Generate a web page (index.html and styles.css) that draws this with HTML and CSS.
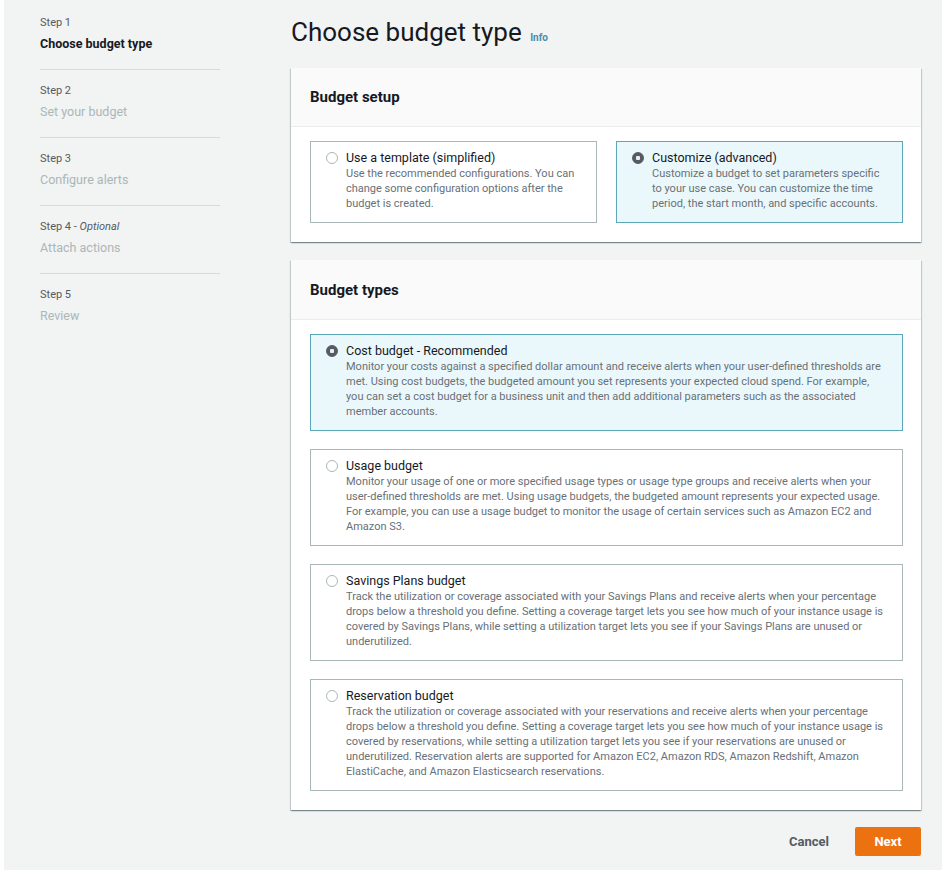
FILE: index.html
```html
<!DOCTYPE html>
<html lang="en">
<head>
<meta charset="utf-8">
<title>Choose budget type</title>
<link rel="stylesheet" href="styles.css">
</head>
<body>
<div class="page">
  <nav class="steps">
    <ol class="step-list">
      <li class="step">
        <div class="step-label">Step 1</div>
        <div class="step-title active">Choose budget type</div>
      </li>
      <li class="step">
        <div class="step-label">Step 2</div>
        <div class="step-title">Set your budget</div>
      </li>
      <li class="step">
        <div class="step-label">Step 3</div>
        <div class="step-title">Configure alerts</div>
      </li>
      <li class="step">
        <div class="step-label">Step 4 - <em>Optional</em></div>
        <div class="step-title">Attach actions</div>
      </li>
      <li class="step last">
        <div class="step-label">Step 5</div>
        <div class="step-title">Review</div>
      </li>
    </ol>
  </nav>

  <main class="content">
    <h1 class="page-title">Choose budget type <a class="info" href="#">Info</a></h1>

    <section class="panel">
      <header class="panel-header"><h2>Budget setup</h2></header>
      <div class="panel-body tiles-2">
        <label class="tile">
          <span class="radio"></span>
          <span class="tile-text">
            <span class="tile-label">Use a template (simplified)</span>
            <span class="tile-desc">Use the recommended configurations. You can change some configuration options after the budget is created.</span>
          </span>
        </label>
        <label class="tile selected">
          <span class="radio checked"></span>
          <span class="tile-text">
            <span class="tile-label">Customize (advanced)</span>
            <span class="tile-desc">Customize a budget to set parameters specific to your use case. You can customize the time period, the start month, and specific accounts.</span>
          </span>
        </label>
      </div>
    </section>

    <section class="panel">
      <header class="panel-header tall"><h2>Budget types</h2></header>
      <div class="panel-body tiles-1">
        <label class="tile selected">
          <span class="radio checked"></span>
          <span class="tile-text">
            <span class="tile-label">Cost budget - Recommended</span>
            <span class="tile-desc">Monitor your costs against a specified dollar amount and receive alerts when your user-defined thresholds are met. Using cost budgets, the budgeted amount you set represents your expected cloud spend. For example, you can set a cost budget for a business unit and then add additional parameters such as the associated member accounts.</span>
          </span>
        </label>
        <label class="tile">
          <span class="radio"></span>
          <span class="tile-text">
            <span class="tile-label">Usage budget</span>
            <span class="tile-desc">Monitor your usage of one or more specified usage types or usage type groups and receive alerts when your user-defined thresholds are met. Using usage budgets, the budgeted amount represents your expected usage. For example, you can use a usage budget to monitor the usage of certain services such as Amazon EC2 and Amazon S3.</span>
          </span>
        </label>
        <label class="tile">
          <span class="radio"></span>
          <span class="tile-text">
            <span class="tile-label">Savings Plans budget</span>
            <span class="tile-desc">Track the utilization or coverage associated with your Savings Plans and receive alerts when your percentage drops below a threshold you define. Setting a coverage target lets you see how much of your instance usage is covered by Savings Plans, while setting a utilization target lets you see if your Savings Plans are unused or underutilized.</span>
          </span>
        </label>
        <label class="tile">
          <span class="radio"></span>
          <span class="tile-text">
            <span class="tile-label">Reservation budget</span>
            <span class="tile-desc">Track the utilization or coverage associated with your reservations and receive alerts when your percentage drops below a threshold you define. Setting a coverage target lets you see how much of your instance usage is covered by reservations, while setting a utilization target lets you see if your reservations are unused or underutilized. Reservation alerts are supported for Amazon EC2, Amazon RDS, Amazon Redshift, Amazon ElastiCache, and Amazon Elasticsearch reservations.</span>
          </span>
        </label>
      </div>
    </section>

    <footer class="actions">
      <button class="btn-link" type="button">Cancel</button>
      <button class="btn-primary" type="button">Next</button>
    </footer>
  </main>
</div>
</body>
</html>
```

FILE: styles.css
```css
* { box-sizing: border-box; }

html, body {
  margin: 0;
  padding: 0;
  background: #ffffff;
}

body {
  font-family: Roboto, "Liberation Sans", Arial, sans-serif;
  color: #16191f;
}

.page {
  margin-left: 4px;
  min-height: 870px;
  background: #f2f3f3;
  display: flex;
  align-items: flex-start;
  padding-left: 36px;
  gap: 71px;
}

/* ---------- Sidebar steps ---------- */
.steps {
  width: 180px;
  flex: none;
  padding-top: 2px;
}

.step-list {
  list-style: none;
  margin: 0;
  padding: 0;
}

.step {
  padding: 13px 0 15px;
  border-bottom: 1px solid #d5dbdb;
}

.step.last { border-bottom: none; }

.step-label {
  font-size: 11px;
  line-height: 16px;
  color: #545b64;
}

.step-label em {
  font-style: italic;
}

.step-title {
  margin-top: 3px;
  font-size: 12.5px;
  line-height: 20px;
  color: #aab7b8;
}

.step-title.active {
  color: #16191f;
  font-weight: 700;
}

/* ---------- Main ---------- */
.content {
  width: 630px;
  flex: none;
}

.page-title {
  margin: 16px 0 20px;
  font-size: 26px;
  line-height: 32px;
  height: 32px;
  font-weight: 400;
  color: #16191f;
}

.info {
  font-size: 10px;
  line-height: 1;
  font-weight: 700;
  color: #4b8ca8;
  text-decoration: none;
  margin-left: 2px;
}

.panel {
  background: #ffffff;
  box-shadow: 0 1px 1px 0 rgba(0, 28, 36, 0.3),
              1px 1px 1px 0 rgba(0, 28, 36, 0.15),
              -1px 1px 1px 0 rgba(0, 28, 36, 0.15);
  margin-bottom: 18px;
}

.panel-header {
  height: 59px;
  padding: 0 19px;
  display: flex;
  align-items: center;
  background: #fafafa;
  border-bottom: 1px solid #eaeded;
}

.panel-header.tall { height: 60px; }

.panel-header h2 {
  margin: 0;
  font-size: 15px;
  font-weight: 700;
  color: #16191f;
}

.panel-body {
  padding: 14px 18px 19px 19px;
}

.tiles-2 {
  display: grid;
  grid-template-columns: 1fr 1fr;
  gap: 19px;
}

.tiles-1 {
  display: flex;
  flex-direction: column;
  gap: 18px;
}

.tile {
  display: flex;
  align-items: flex-start;
  gap: 8px;
  padding: 8px 16px 11px 15px;
  border: 1px solid #aab7b8;
  background: #ffffff;
}

.tile.selected {
  background: #ebf8fb;
  border-color: #5ba8b8;
}

.radio {
  flex: none;
  width: 12px;
  height: 12px;
  margin-top: 2px;
  border-radius: 50%;
  border: 1px solid #aab7b8;
  background: #ffffff;
}

.radio.checked {
  border-color: #545b64;
  background: radial-gradient(circle, #e9eded 0 2px, #545b64 2.5px);
}

.tile-text {
  display: flex;
  flex-direction: column;
}

.tile-label {
  font-size: 12.5px;
  line-height: 16px;
  color: #16191f;
}

.tile-desc {
  font-size: 11px;
  line-height: 15px;
  color: #687078;
}

/* ---------- Footer actions ---------- */
.actions {
  display: flex;
  justify-content: flex-end;
  align-items: center;
  gap: 14px;
  margin-top: -1px;
}

.btn-link {
  border: none;
  background: transparent;
  font-family: inherit;
  font-size: 13px;
  font-weight: 700;
  color: #545b64;
  padding: 6px 12px;
  cursor: pointer;
}

.btn-primary {
  width: 66px;
  height: 29px;
  border: none;
  border-radius: 2px;
  background: #ec7211;
  color: #ffffff;
  font-family: inherit;
  font-size: 13px;
  font-weight: 700;
  cursor: pointer;
}
```
